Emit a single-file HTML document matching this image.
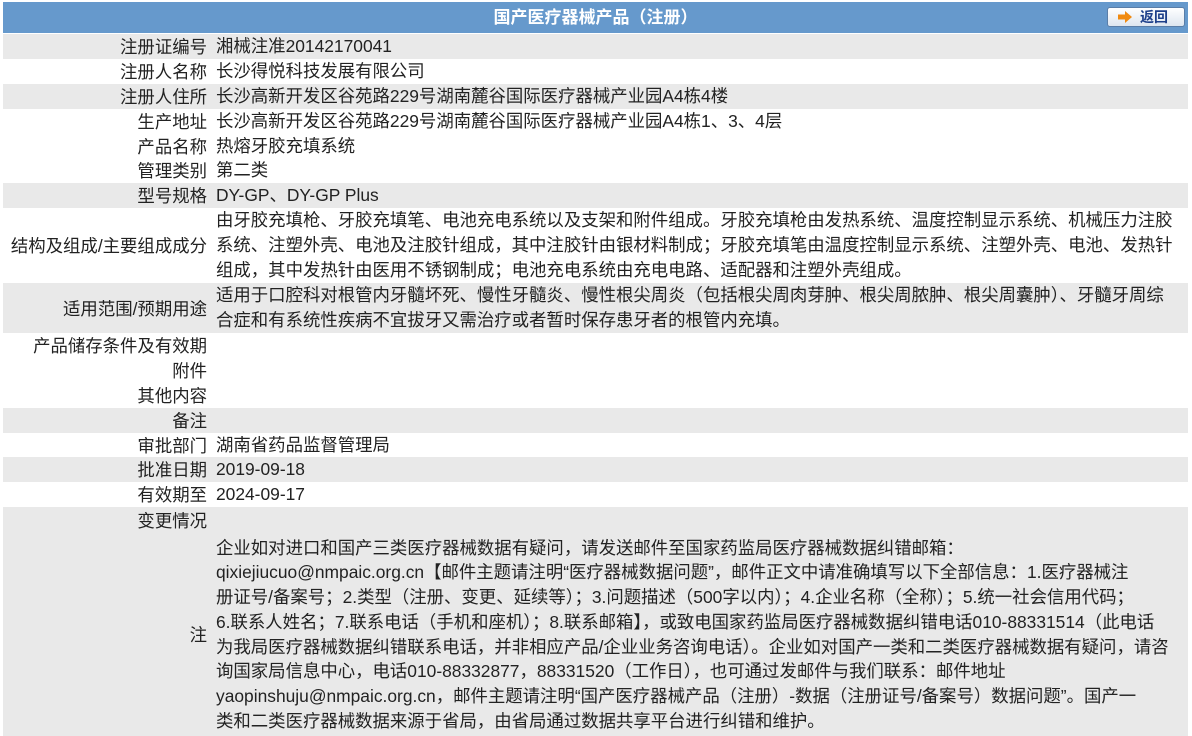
<!DOCTYPE html>
<html><head><meta charset="utf-8"><style>
html,body{margin:0;padding:0;background:#fff;width:1192px;height:736px;overflow:hidden}
body{font-family:"Liberation Sans","Noto Sans CJK SC",sans-serif;font-size:17.4px;color:#222}
.r{position:absolute;left:3px;width:1185px;display:flex;align-items:center;overflow:hidden}
.g{background:#e9e9e9}
.l{width:204px;text-align:right;white-space:nowrap;flex:none}
.v{margin-left:9px;white-space:nowrap;line-height:24.7px}
.hd{position:absolute;left:3px;top:2px;width:1185px;height:31px;background:#6699cc;color:#fff;font-weight:bold;font-size:17px;text-align:center;line-height:31px}
.btn{position:absolute;left:1107px;top:7px;width:78px;height:20px;border:1px solid #5a7ea8;border-radius:3px;background:linear-gradient(#ffffff,#dde6f0);box-sizing:border-box}
.btn span{position:absolute;left:32px;top:0;line-height:18px;font-size:14px;font-weight:bold;color:#1d3f8a}
</style></head><body>
<div class="hd">国产医疗器械产品（注册）</div>
<div class="btn"><svg style="position:absolute;left:10px;top:3px" width="14" height="12" viewBox="0 0 14 12"><path d="M0 3.5H7V0L14 6L7 12V8.5H0Z" fill="#f08a10"/></svg><span>返回</span></div>

<div class="r g" style="top:34px;height:25px"><div class="l">注册证编号</div><div class="v">湘械注准20142170041</div></div>
<div class="r" style="top:59px;height:25px"><div class="l">注册人名称</div><div class="v">长沙得悦科技发展有限公司</div></div>
<div class="r g" style="top:84px;height:25px"><div class="l">注册人住所</div><div class="v">长沙高新开发区谷苑路229号湖南麓谷国际医疗器械产业园A4栋4楼</div></div>
<div class="r" style="top:109px;height:25px"><div class="l">生产地址</div><div class="v">长沙高新开发区谷苑路229号湖南麓谷国际医疗器械产业园A4栋1、3、4层</div></div>
<div class="r" style="top:134px;height:24px"><div class="l">产品名称</div><div class="v">热熔牙胶充填系统</div></div>
<div class="r" style="top:158px;height:25px"><div class="l">管理类别</div><div class="v">第二类</div></div>
<div class="r g" style="top:183px;height:25px"><div class="l">型号规格</div><div class="v">DY-GP、DY-GP Plus</div></div>
<div class="r" style="top:208px;height:75px"><div class="l">结构及组成/主要组成成分</div><div class="v">由牙胶充填枪、牙胶充填笔、电池充电系统以及支架和附件组成。牙胶充填枪由发热系统、温度控制显示系统、机械压力注胶<br>系统、注塑外壳、电池及注胶针组成，其中注胶针由银材料制成；牙胶充填笔由温度控制显示系统、注塑外壳、电池、发热针<br>组成，其中发热针由医用不锈钢制成；电池充电系统由充电电路、适配器和注塑外壳组成。</div></div>
<div class="r g" style="top:283px;height:50px"><div class="l">适用范围/预期用途</div><div class="v">适用于口腔科对根管内牙髓坏死、慢性牙髓炎、慢性根尖周炎（包括根尖周肉芽肿、根尖周脓肿、根尖周囊肿）、牙髓牙周综<br>合症和有系统性疾病不宜拔牙又需治疗或者暂时保存患牙者的根管内充填。</div></div>
<div class="r" style="top:333px;height:25px"><div class="l">产品储存条件及有效期</div></div>
<div class="r" style="top:358px;height:25px"><div class="l">附件</div></div>
<div class="r" style="top:383px;height:25px"><div class="l">其他内容</div></div>
<div class="r g" style="top:408px;height:25px"><div class="l">备注</div></div>
<div class="r" style="top:433px;height:24px"><div class="l">审批部门</div><div class="v">湖南省药品监督管理局</div></div>
<div class="r g" style="top:457px;height:25px"><div class="l">批准日期</div><div class="v">2019-09-18</div></div>
<div class="r" style="top:482px;height:25px"><div class="l">有效期至</div><div class="v">2024-09-17</div></div>
<div class="r g" style="top:507px;height:26px"><div class="l">变更情况</div></div>
<div class="r g" style="top:533px;height:203px"><div class="l">注</div><div class="v">企业如对进口和国产三类医疗器械数据有疑问，请发送邮件至国家药监局医疗器械数据纠错邮箱：<br>qixiejiucuo@nmpaic.org.cn【邮件主题请注明“医疗器械数据问题”，邮件正文中请准确填写以下全部信息：1.医疗器械注<br>册证号/备案号；2.类型（注册、变更、延续等）；3.问题描述（500字以内）；4.企业名称（全称）；5.统一社会信用代码；<br>6.联系人姓名；7.联系电话（手机和座机）；8.联系邮箱】，或致电国家药监局医疗器械数据纠错电话010-88331514（此电话<br>为我局医疗器械数据纠错联系电话，并非相应产品/企业业务咨询电话）。企业如对国产一类和二类医疗器械数据有疑问，请咨<br>询国家局信息中心，电话010-88332877，88331520（工作日），也可通过发邮件与我们联系：邮件地址<br>yaopinshuju@nmpaic.org.cn，邮件主题请注明“国产医疗器械产品（注册）-数据（注册证号/备案号）数据问题”。国产一<br>类和二类医疗器械数据来源于省局，由省局通过数据共享平台进行纠错和维护。</div></div>
</body></html>
